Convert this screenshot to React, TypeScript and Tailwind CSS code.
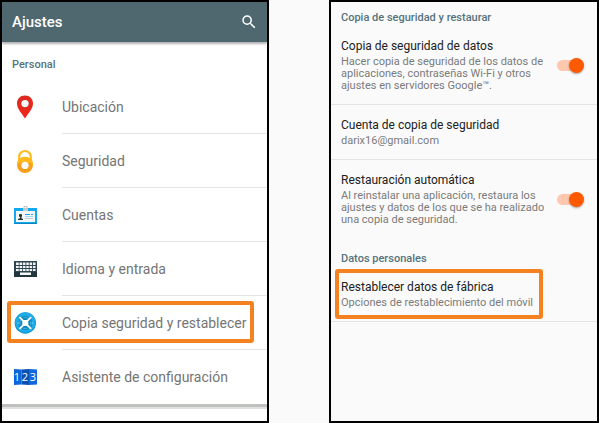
import { useState } from "react";

type SwitchRowProps = {
    id: string;
    title: string;
    text: string;
};

function PinIcon() {
    return (
        <svg viewBox="0 0 24 24" className="size-6">
            <defs>
                <linearGradient id="pin" x1="0" y1="0" x2="0" y2="1">
                    <stop offset="0" stopColor="#dc2a1f" />
                    <stop offset="1" stopColor="#f5261a" />
                </linearGradient>
            </defs>
            <path d="M12 0.500C7.300 0.500 4 4 4 8.400c0 5.500 5 10 8 15 3-5 8-9.500 8-15C20 4 16.700 0.500 12 0.500z" fill="url(#pin)" />
            <circle cx="12" cy="9" r="3.900" fill="#b8271e" />
            <circle cx="12" cy="8.600" r="3.700" fill="#fafafa" />
        </svg>
    );
}

function LockIcon() {
    return (
        <svg viewBox="0 0 24 24" className="size-6">
            <path d="M6.200 13V7.500a5.800 5.500 0 0 1 11.600 0V13" fill="none" stroke="#fdbb1e" strokeWidth="2.200" />
            <circle cx="12" cy="16" r="8" fill="#f9a01b" />
            <path d="M4 15.500a8 7.800 0 0 1 16 0c-2-3-14-3-16 0z" fill="#ffb91a" />
            <circle cx="12" cy="16.800" r="3.900" fill="#dd8a10" />
            <circle cx="12" cy="16.400" r="3.700" fill="#fafafa" />
        </svg>
    );
}

function CardIcon() {
    return (
        <svg viewBox="0 0 24 24" className="size-6">
            <rect x="1" y="5" width="23" height="16" fill="#14a9ec" />
            <rect x="1" y="20" width="23" height="1" fill="#0b86c2" />
            <rect x="3" y="8" width="19" height="11" fill="#f4f7f8" />
            <rect x="10" y="5" width="5" height="3" fill="#c6cccf" />
            <path d="M11 6V3.500h3V6" fill="none" stroke="#b9bfc2" />
            <rect x="6" y="11" width="3" height="3" rx="1" fill="#263238" />
            <path d="M7 14h1.500v1.200L10 16v1H5v-1l2-.8z" fill="#263238" />
            <path d="M12 11h5v1h-5zM18 11h2v1h-2z" fill="#14a9ec" />
            <path d="M12 13h8v1h-8z" fill="#9fdcf5" />
            <path d="M12 15h8v1h-8z" fill="#c4cdd1" />
        </svg>
    );
}

function KeyboardIcon() {
    return (
        <svg viewBox="0 0 24 24" className="size-6">
            <rect x="1" y="4" width="23" height="16" fill="#2f434f" />
            <rect x="1" y="15" width="23" height="5" fill="#22343e" />
            <path
                d="M3 5.500h2.700v2.500h-2.700zM6.500 5.500h2.700v2.500h-2.700zM10 5.500h2.500v2.500h-2.500zM13.300 5.500h2.500v2.500h-2.500zM16.600 5.500h2.500v2.500h-2.500zM20 5.500h2.500v2.500h-2.500zM3 9h2.700v2h-2.700zM6.500 9h2.700v2h-2.700zM10 9h2.500v2h-2.500zM13.300 9h2.500v2h-2.500zM16.600 9h2.500v2h-2.500zM20 9h2.500v2h-2.500zM3 12h2.700v2h-2.700zM6.500 12h2.700v2h-2.700zM10 12h2.500v2h-2.500zM13.300 12h2.500v2h-2.500zM16.600 12h2.500v2h-2.500zM20 12h2.500v2h-2.500zM7 15.500h11v2.500h-11z"
                fill="#f2f6f8"
            />
        </svg>
    );
}

function BackupIcon() {
    return (
        <svg viewBox="0 0 24 24" className="size-6">
            <circle cx="12.300" cy="12" r="10.700" fill="#0e8fcb" />
            <circle cx="12.300" cy="11.500" r="10.200" fill="#1facE6" />
            <circle cx="12.300" cy="12" r="7" fill="#0f86c0" />
            <circle cx="12.300" cy="12" r="5.500" fill="none" stroke="#45bdea" strokeWidth="1" strokeDasharray="5 3.640" strokeDashoffset="2.500" />
            <path d="M7 6.700l10.600 10.600M17.600 6.700L7 17.300" stroke="#fff" strokeWidth="1.800" strokeLinecap="round" />
            <rect x="9.300" y="9" width="6" height="6" rx="2" fill="#fff" />
            <path d="M4.500 12h1.500M18.600 12h1.500" stroke="#8ad8f5" />
        </svg>
    );
}

function WizardIcon() {
    return (
        <svg viewBox="0 0 24 24" className="size-6">
            <path d="M1 4l7.500 .5v15L1 20z" fill="#0a66da" />
            <path d="M8.500 4.500L16 4v16l-7.500-.5z" fill="#0a50b4" />
            <path d="M16 4l8 .5v15l-8 .5z" fill="#1068dc" />
            <g fill="#fff" fontFamily="Open Sans, sans-serif" fontSize="11" textAnchor="middle">
                <text x="4" y="16">1</text>
                <text x="12" y="16">2</text>
                <text x="20" y="16">3</text>
            </g>
        </svg>
    );
}

const personalItems = [
    { label: "Ubicación", icon: <PinIcon /> },
    { label: "Seguridad", icon: <LockIcon /> },
    { label: "Cuentas", icon: <CardIcon /> },
    { label: "Idioma y entrada", icon: <KeyboardIcon /> },
    { label: "Copia seguridad y restablecer", icon: <BackupIcon />, highlighted: true },
    { label: "Asistente de configuración", icon: <WizardIcon /> },
];

function SwitchRow({ id, title, text }: SwitchRowProps) {
    const [enabled, setEnabled] = useState(true);

    return (
        <div className="flex items-center justify-between py-3 pr-[13px] pl-[10px]">
            <label htmlFor={id} className="max-w-[208px]">
                <span className="block text-xs leading-4 text-[#212121]">{title}</span>
                <span className="mt-0.5 block text-[11px] leading-3 text-[#7b7b7b]">{text}</span>
            </label>
            <span className="relative flex h-4 w-[27px] shrink-0 items-center">
                <input
                    id={id}
                    type="checkbox"
                    role="switch"
                    checked={enabled}
                    onChange={(e) => setEnabled(e.target.checked)}
                    className="peer h-[11px] w-[26px] appearance-none rounded-full bg-[#d0d0d0] checked:bg-[#ffc8ae]"
                />
                <span className="pointer-events-none absolute left-0 size-[15px] rounded-full bg-white shadow-[0_1px_2px_rgba(0,0,0,0.35)] peer-checked:right-0 peer-checked:left-auto peer-checked:bg-[#ff5a00]" />
            </span>
        </div>
    );
}

function App() {
    return (
        <div className="grid min-h-screen grid-cols-[269fr_270fr] gap-[60px] bg-[#fafafa] font-['Roboto',sans-serif]">
            <section className="flex flex-col border-2 border-black bg-white">
                <header className="flex h-10 items-center justify-between bg-[#4f676f] pr-[9px] pl-[10px] shadow-[0_2px_2px_rgba(0,0,0,0.3)]">
                    <h1 className="text-[15px] font-medium text-white">Ajustes</h1>
                    <button type="button" aria-label="Buscar">
                        <svg viewBox="0 0 24 24" className="size-[18px]" fill="#fff">
                            <path d="M15.500 14h-.79l-.28-.27A6.471 6.471 0 0 0 16 9.500 6.500 6.500 0 1 0 9.500 16c1.610 0 3.090-.59 4.230-1.570l.27.28v.79l5 4.990L20.490 19l-4.990-5zm-6 0C7.010 14 5 11.990 5 9.500S7.010 5 9.500 5 14 7.010 14 9.500 11.990 14 9.500 14z" />
                        </svg>
                    </button>
                </header>
                <h2 className="px-[10px] pt-[15px] pb-[7px] text-[11px] leading-4 font-medium text-[#56737c]">Personal</h2>
                <ul className="shadow-[0_3px_0_#bfc1bf,0_5px_0_#e0e0e0]">
                    {personalItems.map((item) => (
                        <li key={item.label} className="group relative">
                            <button type="button" className="flex w-full items-center pl-[11px] text-left">
                                <span className="w-[49px]">{item.icon}</span>
                                <span className="flex h-[54px] flex-1 items-center border-b border-[#e4e4e4] text-sm text-[#757575] group-last:border-transparent">
                                    {item.label}
                                </span>
                            </button>
                            {item.highlighted && (
                                <span className="pointer-events-none absolute top-[5px] right-[13px] bottom-[7px] left-[5px] rounded-[3px] border-4 border-[#f58220]" />
                            )}
                        </li>
                    ))}
                </ul>
            </section>

            <section className="border-2 border-black bg-[#fafafa]">
                <h2 className="px-[10px] pt-2 text-[11px] leading-4 font-medium text-[#56737c]">Copia de seguridad y restaurar</h2>
                <div className="divide-y divide-[#e4e4e4]">
                    <SwitchRow
                        id="backup"
                        title="Copia de seguridad de datos"
                        text="Hacer copia de seguridad de los datos de aplicaciones, contraseñas Wi-Fi y otros ajustes en servidores Google™."
                    />
                    <button type="button" className="block w-full px-[10px] py-3 text-left">
                        <span className="block text-xs leading-4 text-[#212121]">Cuenta de copia de seguridad</span>
                        <span className="mt-0.5 block text-[11px] leading-3 text-[#7b7b7b]">darix16@gmail.com</span>
                    </button>
                    <SwitchRow
                        id="restore"
                        title="Restauración automática"
                        text="Al reinstalar una aplicación, restaura los ajustes y datos de los que se ha realizado una copia de seguridad."
                    />
                </div>
                <h2 className="px-[10px] pt-[13px] text-[11px] leading-4 font-medium text-[#56737c]">Datos personales</h2>
                <div className="relative border-b border-[#e4e4e4]">
                    <button type="button" className="block w-full px-[10px] py-3 text-left">
                        <span className="block text-xs leading-4 text-[#212121]">Restablecer datos de fábrica</span>
                        <span className="mt-0.5 block text-[11px] leading-3 text-[#7b7b7b]">Opciones de restablecimiento del móvil</span>
                    </button>
                    <span className="pointer-events-none absolute top-[2px] right-[54px] bottom-[2px] left-1 rounded-[3px] border-4 border-[#f58220]" />
                </div>
            </section>
        </div>
    );
}

export default App;
